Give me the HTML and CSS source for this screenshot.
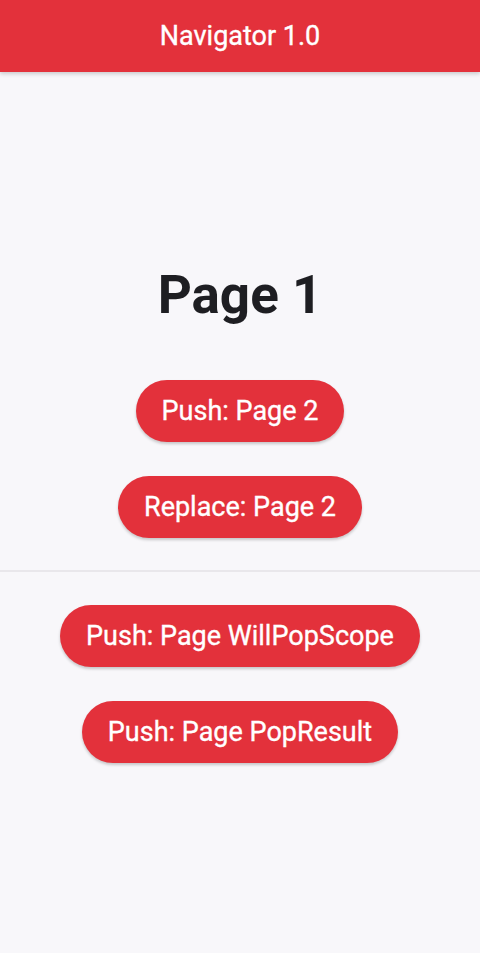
FILE: index.html
```html
<!DOCTYPE html>
<html>
<head>
<meta charset="utf-8">
<link rel="stylesheet" href="styles.css">
</head>
<body>
<header class="appbar">Navigator 1.0</header>
<main class="content">
  <h1 class="title">Page 1</h1>
  <div class="group">
    <button class="btn">Push: Page 2</button>
    <button class="btn">Replace: Page 2</button>
  </div>
  <hr class="divider">
  <div class="group">
    <button class="btn">Push: Page WillPopScope</button>
    <button class="btn">Push: Page PopResult</button>
  </div>
</main>
</body>
</html>
```
FILE: styles.css
```css
html, body {
  margin: 0;
  padding: 0;
  height: 100%;
}
body {
  background: #f8f7fa;
  font-family: Roboto, "Noto Sans", sans-serif;
  display: flex;
  flex-direction: column;
}
.appbar {
  height: 72px;
  flex: none;
  background: #e3313b;
  color: #fff;
  font-size: 27px;
  font-weight: 400;
  -webkit-text-stroke: 0.35px #fff;
  display: flex;
  align-items: center;
  justify-content: center;
  box-shadow: 0 2px 4px rgba(0,0,0,0.18);
  position: relative;
  z-index: 1;
}
.content {
  flex: 1;
  display: flex;
  flex-direction: column;
  align-items: center;
  justify-content: center;
}
.title {
  margin: 0 0 52px;
  font-size: 53px;
  line-height: 66px;
  font-weight: 700;
  color: #1e1e22;
}
.group {
  display: flex;
  flex-direction: column;
  align-items: center;
  gap: 34px;
}
.btn {
  height: 62px;
  padding: 0 26px;
  border: none;
  border-radius: 31px;
  background: #e3313b;
  color: #fff;
  font-family: Roboto, sans-serif;
  font-size: 27px;
  font-weight: 400;
  -webkit-text-stroke: 0.35px #fff;
  box-shadow: 0 2px 3px rgba(0,0,0,0.2);
}
.divider {
  align-self: stretch;
  border: none;
  height: 2px;
  background: #e9e7eb;
  margin: 32px 0 33px;
}
```
